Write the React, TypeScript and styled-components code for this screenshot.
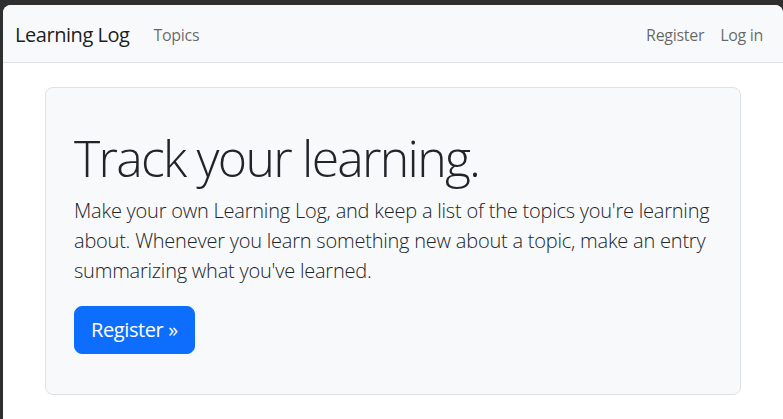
import React from "react";
import styled, { createGlobalStyle } from "styled-components";

const Global = createGlobalStyle`
  html, body { margin: 0; padding: 0; }
  body {
    background: #2f2f2f;
    font-family: "Open Sans", "Noto Sans", sans-serif;
    color: #212529;
  }
  * { box-sizing: border-box; }
`;

const Frame = styled.div`
  padding: 5px 0 0 3px;
  height: 419px;
  overflow: hidden;
`;

const Window = styled.div`
  background: #fff;
  border-radius: 8px 8px 0 0;
  height: 414px;
  overflow: hidden;
`;

const Navbar = styled.nav`
  background: #f8f9fa;
  border-bottom: 1px solid #dee2e6;
  padding: 9px 12px 7px;
  display: flex;
  align-items: center;
  margin-bottom: 24px;
  height: 58px;
`;

const Brand = styled.a`
  font-size: 20px;
  line-height: 30px;
  padding: 5px 0;
  margin-right: 16px;
  color: rgba(0, 0, 0, 0.9);
  text-decoration: none;
  letter-spacing: -0.45px;
`;

const NavGroup = styled.div<{ $end?: boolean }>`
  display: flex;
  margin-left: ${(p) => (p.$end ? "auto" : "0")};
`;

const NavLink = styled.a`
  font-size: 16px;
  line-height: 24px;
  padding: 8px;
  color: rgba(0, 0, 0, 0.6);
  text-decoration: none;
  letter-spacing: -0.3px;
`;

const Container = styled.div`
  width: 720px;
  margin: 0 auto;
  padding: 0 12px;
`;

const Jumbo = styled.section`
  background: #f8f9fa;
  border: 1px solid #dee2e6;
  border-radius: 8px;
  padding: 16px;
`;

const Inner = styled.div`
  padding: 24px 12px;
  display: flex;
  flex-direction: column;
  align-items: flex-start;
`;

const Title = styled.h1`
  margin: 0 0 8px;
  font-size: 50px;
  line-height: 60px;
  font-weight: 300;
  letter-spacing: -1.75px;
`;

const Lead = styled.p`
  margin: 0 0 16px;
  font-size: 20px;
  line-height: 30px;
  font-weight: 300;
  letter-spacing: -0.22px;
`;

const Button = styled.a`
  margin-top: 4px;
  display: inline-block;
  background: #0d6efd;
  color: #fff;
  border: 1px solid #0d6efd;
  border-radius: 8px;
  padding: 8px 16px;
  font-size: 20px;
  line-height: 30px;
  text-decoration: none;
  letter-spacing: -0.4px;
`;

export default function App() {
  return (
    <>
      <Global />
      <Frame>
        <Window>
          <Navbar>
            <Brand href="#">Learning Log</Brand>
            <NavGroup>
              <NavLink href="#">Topics</NavLink>
            </NavGroup>
            <NavGroup $end>
              <NavLink href="#">Register</NavLink>
              <NavLink href="#">Log in</NavLink>
            </NavGroup>
          </Navbar>
          <Container>
            <Jumbo>
              <Inner>
                <Title>Track your learning.</Title>
                <Lead>
                  Make your own Learning Log, and keep a list of the topics you're learning
                  about. Whenever you learn something new about a topic, make an entry
                  summarizing what you've learned.
                </Lead>
                <Button href="#">Register »</Button>
              </Inner>
            </Jumbo>
          </Container>
        </Window>
      </Frame>
    </>
  );
}
